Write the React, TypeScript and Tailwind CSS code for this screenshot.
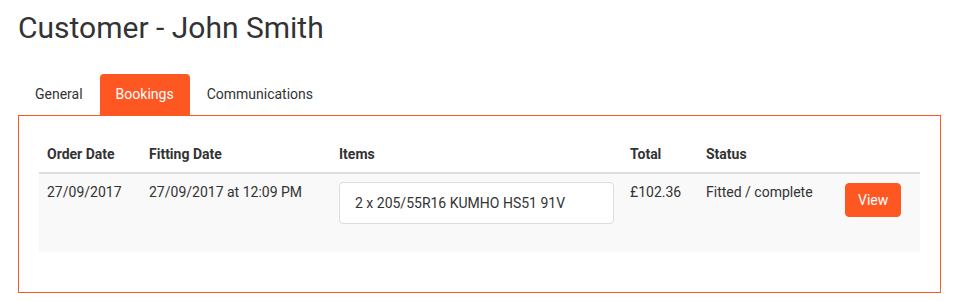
const bookings = [
  {
    orderDate: '27/09/2017',
    fittingDate: '27/09/2017 at 12:09 PM',
    items: '2 x 205/55R16 KUMHO HS51 91V',
    total: '£102.36',
    status: 'Fitted / complete',
  },
];

const tabs = ['General', 'Bookings', 'Communications'];

export default function App() {
  return (
    <div className="min-h-screen bg-white pl-[18px] pr-[17px] text-[14px] leading-[20px] text-[#333] font-['Roboto',_sans-serif]">
      <h1 className="mt-[11px] text-[30px] leading-[33px] font-normal text-[#333]">Customer - John Smith</h1>

      {/* Tabs */}
      <ul className="mt-[30px] flex pl-[1px]">
        {tabs.map((tab) => (
          <li key={tab} className="mr-[1px]">
            <a
              className={
                tab === 'Bookings'
                  ? 'block rounded-t-[4px] bg-[#ff5722] px-[16px] pt-[10px] pb-[11px] text-white'
                  : 'block rounded-t-[4px] px-[16px] pt-[10px] pb-[11px] text-[#333]'
              }
            >
              {tab}
            </a>
          </li>
        ))}
      </ul>

      {/* Bookings panel */}
      <div className="w-[923px] border border-[#ff5722] p-[20px]">
        <div className="mb-[20px]">
          <div className="grid grid-cols-[102px_190px_291px_76px_139px_1fr] border-b-2 border-[#ddd] font-bold">
            <div className="p-[8px]">Order Date</div>
            <div className="p-[8px]">Fitting Date</div>
            <div className="p-[8px]">Items</div>
            <div className="p-[8px]">Total</div>
            <div className="p-[8px]">Status</div>
            <div className="p-[8px]"></div>
          </div>
          {bookings.map((b) => (
            <div key={b.items} className="grid grid-cols-[102px_190px_291px_76px_139px_1fr] bg-[#f9f9f9]">
              <div className="p-[8px]">{b.orderDate}</div>
              <div className="p-[8px]">{b.fittingDate}</div>
              <div className="p-[8px]">
                <div className="mb-[20px] rounded-[4px] border border-[#ddd] bg-white px-[15px] py-[10px]">{b.items}</div>
              </div>
              <div className="p-[8px]">{b.total}</div>
              <div className="p-[8px]">{b.status}</div>
              <div className="p-[8px]">
                <button className="mt-px rounded-[4px] border border-[#ff5722] bg-[#ff5722] px-[12px] py-[6px] text-white">
                  View
                </button>
              </div>
            </div>
          ))}
        </div>
      </div>
    </div>
  );
}
